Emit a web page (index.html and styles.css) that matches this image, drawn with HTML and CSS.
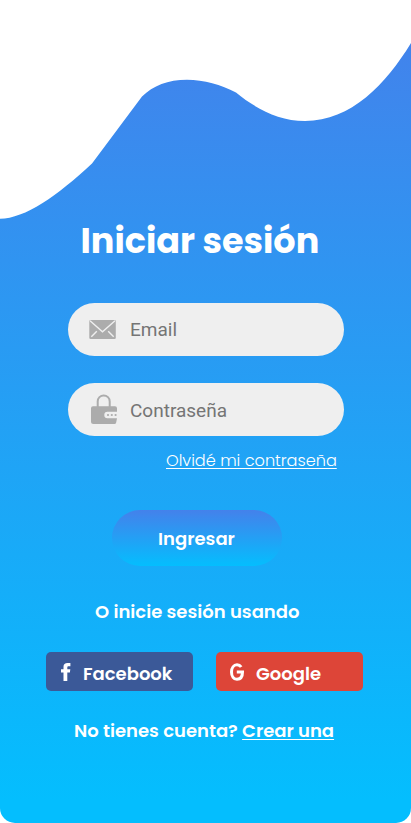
FILE: index.html
```html
<!DOCTYPE html>
<html lang="es">
<head>
<meta charset="utf-8">
<meta name="viewport" content="width=device-width, initial-scale=1">
<title>Iniciar sesión</title>
<link rel="stylesheet" href="styles.css">
</head>
<body>
<main class="screen">
  <svg class="wave" viewBox="0 0 411 220" aria-hidden="true">
    <path fill="#fff" d="M0 0H411V43C386 84 351 121 305 121C278 121 255 108 236 92.500C221 84.500 204 79.700 187 79.700C168 79.700 153 85.500 142 96.500L92 163.500C57 196 25 218.500 0 218.800Z"/>
  </svg>
  <h1 class="title"><span>Iniciar sesión</span></h1>
  <form class="form">
    <label class="field">
      <svg class="field-icon" width="30" height="32" viewBox="0 0 30 32" aria-hidden="true">
        <rect x="1.300" y="7" width="26.500" height="19" rx="1.300" fill="#acacac"/>
        <path d="M2 7.700L14.500 18.800L27 7.700M3.300 23.800L8.800 18.200M25.700 23.800L20.200 18.200" fill="none" stroke="#efefef" stroke-width="1.400"/>
      </svg>
      <input class="input" type="text" placeholder="Email">
    </label>
    <label class="field">
      <svg class="field-icon" width="30" height="32" viewBox="0 0 30 32" aria-hidden="true">
        <path d="M9.700 14V8.400a6 6 0 0 1 12 0V14" fill="none" stroke="#acacac" stroke-width="2"/>
        <path d="M5 13.200H27a2 2 0 0 1 2 2V18.800H19.500a3.200 3.200 0 0 0 0 6.400H29L28.200 29.500Q27.800 31 26.500 31H5.500a2.500 2.500 0 0 1-2.500-2.500V15.200a2 2 0 0 1 2-2Z" fill="#acacac"/>
        <g fill="#acacac"><circle cx="20" cy="22" r="1.100"/><circle cx="23.800" cy="22" r="1.100"/><circle cx="27.600" cy="22" r="1.100"/></g>
      </svg>
      <input class="input password" type="password" placeholder="Contraseña">
    </label>
    <a class="forgot">Olvidé mi contraseña</a>
    <button class="submit" type="button">Ingresar</button>
  </form>
  <p class="alt"><span>O inicie sesión usando</span></p>
  <div class="socials">
    <a class="social facebook">
      <svg class="social-icon" width="18" height="20" viewBox="0 0 18 20" aria-hidden="true"><path fill="#fff" d="M5.500 19V10.500H3V7.200H5.500V4.800C5.500 2.200 7 1 9.500 1H12.400V4.200H10.700C9.700 4.200 9.300 4.600 9.300 5.500V7.200H12.300L11.900 10.500H9.300V19Z"/></svg>
      <span>Facebook</span>
    </a>
    <a class="social google">
      <svg class="social-icon" width="18" height="20" viewBox="0 0 18 20" aria-hidden="true"><path fill="none" stroke="#fff" stroke-width="3" d="M13.200 5C12.200 3.500 10.800 2.700 9 2.700C5.800 2.700 3.500 5.800 3.500 10S5.800 17.300 9 17.300C12.500 17.300 14.500 14.500 14.500 10.100H8.800"/></svg>
      <span>Google</span>
    </a>
  </div>
  <p class="signup"><span>No tienes cuenta?</span> <a class="create">Crear una</a></p>
</main>
</body>
</html>
```
FILE: styles.css
```css
* { box-sizing: border-box; }
body { margin: 0; background: #fff; color: #fff; font-family: Poppins, Inter, sans-serif; }
h1, p { margin: 0; }
.screen {
  width: 411px; height: 823px; overflow: hidden;
  display: flex; flex-direction: column; align-items: center;
  border-radius: 0 0 15px 15px;
  background: linear-gradient(#4481eb 15px, #04befe 800px);
}
.wave { display: block; width: 411px; height: 220px; flex: none; }
.title { width: 238px; height: 42px; white-space: nowrap; font-size: 35px; line-height: 42px; font-weight: 700; margin-right: 12px; }
.form { width: 276px; margin-top: 41px; display: flex; flex-direction: column; }
.field { height: 53px; margin-bottom: 27px; padding-left: 20px; border-radius: 27px; background: #efefef; display: flex; align-items: center; gap: 12px; }
.field-icon { flex: none; margin-top: -1px; }
.input { width: 190px; padding: 1px 0 0 .5px; border: 0; outline: 0; background: none; font: 19px/24px Roboto, sans-serif; color: #757575; }
.input::placeholder { color: #757575; opacity: 1; }
.password { padding-top: 3px; }
.forgot { align-self: flex-end; width: 171px; margin: -14px 6.500px 0 0; white-space: nowrap; font-size: 16.1px; line-height: 24px; font-weight: 300; text-decoration: underline; text-decoration-thickness: 1px; text-underline-offset: 2px; }
.submit { width: 170px; height: 56px; margin: 37px 0 0 44px; padding: 2px 0 0; border: 0; border-radius: 28px; background: linear-gradient(#4481eb, #04befe); color: #fff; font: 600 18px/54px Poppins, Inter, sans-serif; }
.alt { width: 205px; margin: 34px 16px 0 0; white-space: nowrap; font-size: 18px; line-height: 24px; font-weight: 600; }
.socials { width: 317px; margin: 28px 2px 0 0; display: flex; justify-content: space-between; }
.social { width: 147px; height: 39px; border-radius: 5px; display: flex; align-items: center; font-size: 18px; line-height: 24px; font-weight: 600; padding: 5px 0 0 12px; }
.social-icon { margin: -4px 7px 0 0; flex: none; }
.facebook { background: #3b5998; }
.google { background: #dd4538; }
.google .social-icon { margin-right: 10px; }
.signup { width: 260px; margin: 28px 3px 0 0; white-space: nowrap; font-size: 18px; line-height: 24px; font-weight: 600; }
.create { text-decoration: underline; text-decoration-thickness: 1px; text-underline-offset: 2px; }
```
